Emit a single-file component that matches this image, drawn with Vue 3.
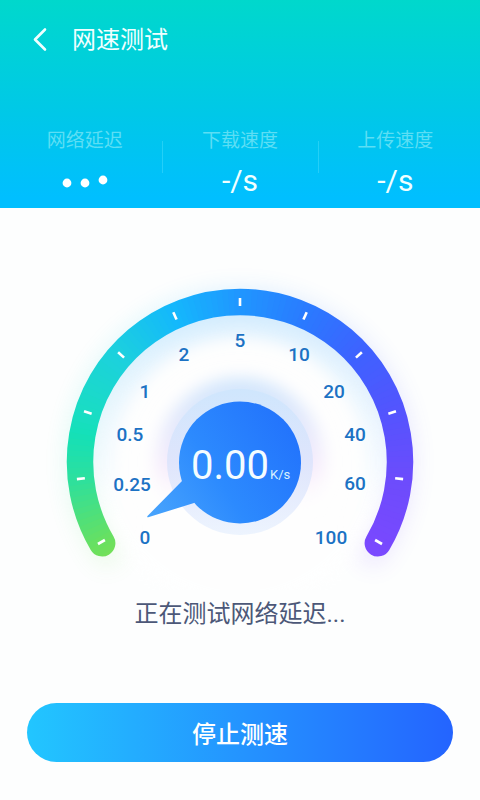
<script setup>
const CX = 190
const CY = 192
const R = 160

const point = (deg, r) => {
  const a = (deg * Math.PI) / 180
  return [CX + r * Math.sin(a), CY - r * Math.cos(a)]
}
const arc = (from, to, r = R) => {
  const [x1, y1] = point(from, r)
  const [x2, y2] = point(to, r)
  const large = to - from > 180 ? 1 : 0
  return `M${x1.toFixed(2)} ${y1.toFixed(2)}A${r} ${r} 0 ${large} 1 ${x2.toFixed(2)} ${y2.toFixed(2)}`
}

const stops = [
  [-128, [120, 224, 84]],
  [-120, [104, 224, 96]],
  [-96, [44, 224, 158]],
  [-80, [20, 224, 184]],
  [-72, [26, 220, 196]],
  [-48, [28, 208, 222]],
  [-24, [20, 184, 252]],
  [0, [32, 150, 255]],
  [24, [42, 122, 255]],
  [48, [62, 98, 255]],
  [72, [84, 84, 254]],
  [96, [108, 76, 252]],
  [128, [124, 72, 255]],
]
const colourAt = (deg) => {
  const i = Math.max(1, stops.findIndex(([d]) => d >= deg))
  const [d0, c0] = stops[i - 1]
  const [d1, c1] = stops[i]
  const t = (deg - d0) / (d1 - d0)
  return `rgb(${c0.map((v, k) => Math.round(v + (c1[k] - v) * t)).join(',')})`
}
const segments = Array.from({ length: 128 }, (_, i) => {
  const deg = -128 + i * 2
  return { d: arc(deg, Math.min(deg + 3, 128)), colour: colourAt(deg + 1) }
})
const ring = arc(-120.5, 120.5)
const ticks = Array.from({ length: 11 }, (_, i) => -120 + i * 24)

const labels = [
  { text: '0', x: 95, y: 274 },
  { text: '0.25', x: 82, y: 221 },
  { text: '0.5', x: 80, y: 171 },
  { text: '1', x: 95, y: 128 },
  { text: '2', x: 134, y: 91 },
  { text: '5', x: 190, y: 77 },
  { text: '10', x: 249, y: 91 },
  { text: '20', x: 284, y: 128 },
  { text: '40', x: 305, y: 171 },
  { text: '60', x: 305, y: 220 },
  { text: '100', x: 281, y: 274 },
]
</script>

<template>
  <div class="page">
    <header class="top">
      <div class="bar">
        <button class="back" type="button" aria-label="返回">
          <svg width="16" height="26" viewBox="0 0 16 26">
            <path d="M13 2.500L3 12.500L13 22.500" fill="none" stroke="currentColor" stroke-width="2.6" stroke-linecap="round" stroke-linejoin="round" />
          </svg>
        </button>
        <h1 class="title">网速测试</h1>
      </div>
      <div class="stats">
        <div class="stat">
          <span class="name">网络延迟</span>
          <span class="value">
            <svg width="46" height="16" viewBox="0 0 46 16" fill="#fff">
              <circle cx="5" cy="10" r="4.4" />
              <circle cx="23" cy="10" r="4.4" />
              <circle cx="41" cy="7" r="4.4" />
            </svg>
          </span>
        </div>
        <div class="stat">
          <span class="name">下载速度</span>
          <span class="value">-/s</span>
        </div>
        <div class="stat">
          <span class="name">上传速度</span>
          <span class="value">-/s</span>
        </div>
      </div>
    </header>

    <main class="content">
      <svg class="gauge" viewBox="0 0 380 320">
        <defs>
          <mask id="ring-mask" maskUnits="userSpaceOnUse" x="0" y="0" width="380" height="320">
            <path :d="ring" fill="none" stroke="#fff" stroke-width="26.5" stroke-linecap="round" />
          </mask>
          <filter id="glow" filterUnits="userSpaceOnUse" x="-40" y="-40" width="460" height="400">
            <feGaussianBlur stdDeviation="12" />
          </filter>
          <filter id="soft" filterUnits="userSpaceOnUse" x="0" y="0" width="380" height="320">
            <feGaussianBlur stdDeviation="8" />
          </filter>
          <linearGradient id="disc" gradientUnits="userSpaceOnUse" x1="98" y1="246" x2="246" y2="150">
            <stop offset="0" stop-color="#48a4fc" />
            <stop offset="0.45" stop-color="#2c8afe" />
            <stop offset="1" stop-color="#2272fc" />
          </linearGradient>
          <linearGradient id="halo" x1="0" y1="0" x2="0" y2="1">
            <stop offset="0" stop-color="#cfe6fd" />
            <stop offset="0.5" stop-color="#dfe5fc" />
            <stop offset="1" stop-color="#edf4fe" />
          </linearGradient>
          <linearGradient id="aura" x1="0" y1="0" x2="0" y2="1">
            <stop offset="0" stop-color="#c8e2fc" stop-opacity="0.9" />
            <stop offset="0.55" stop-color="#f6e8fb" stop-opacity="0.8" />
            <stop offset="0.8" stop-color="#fff" stop-opacity="0" />
          </linearGradient>
          <linearGradient id="fade" x1="0" y1="0" x2="0" y2="1">
            <stop offset="0" stop-color="#b4defd" stop-opacity="0.5" />
            <stop offset="0.5" stop-color="#d8f0fd" stop-opacity="0.25" />
            <stop offset="0.75" stop-color="#fff" stop-opacity="0" />
          </linearGradient>
          <clipPath id="inside"><circle :cx="CX" :cy="CY" r="148" /></clipPath>
        </defs>

        <g filter="url(#glow)" opacity="0.15">
          <path v-for="(s, i) in segments" :key="i" :d="s.d" :stroke="s.colour" fill="none" stroke-width="24" />
        </g>
        <circle :cx="CX" :cy="CY" r="147" fill="#fff" opacity="0.6" filter="url(#soft)" />
        <g clip-path="url(#inside)">
          <circle :cx="CX" :cy="CY" r="148" fill="none" stroke="url(#fade)" stroke-width="44" filter="url(#soft)" />
        </g>

        <g mask="url(#ring-mask)">
          <path v-for="(s, i) in segments" :key="i" :d="s.d" :stroke="s.colour" fill="none" stroke-width="34" />
        </g>
        <rect
          v-for="t in ticks"
          :key="t"
          :x="CX - 1.3"
          :y="CY - R - 4"
          width="2.6"
          height="8"
          fill="#fff"
          :transform="`rotate(${t} ${CX} ${CY})`"
        />

        <circle :cx="CX" :cy="CY" r="84" fill="url(#aura)" filter="url(#soft)" />
        <circle :cx="CX" :cy="CY" r="73" fill="url(#halo)" />
        <path d="M132 211L97.500 246Q96.500 248 99 247L144 233L190 200Z" fill="url(#disc)" />
        <circle :cx="CX" :cy="CY + 0.5" r="61" fill="url(#disc)" />

        <text v-for="l in labels" :key="l.text" class="mark" :x="l.x" :y="l.y">{{ l.text }}</text>
        <text class="speed" x="141" y="209">0.00</text>
        <text class="unit" x="220" y="209">K/s</text>
      </svg>

      <p class="status">正在测试网络延迟...</p>
      <button class="stop" type="button">停止测速</button>
    </main>
  </div>
</template>

<style>
body {
  margin: 0;
  background: #fdfefe;
}
</style>

<style scoped>
.page {
  min-height: 100vh;
  display: flex;
  flex-direction: column;
  font-family: Roboto, "Noto Sans CJK SC", sans-serif;
  background: #fdfefe;
}
.top {
  padding: 20px 7px 8px;
  background: linear-gradient(180deg, #00d8cc 0%, #00c8e8 55%, #00bfff 95%);
  color: #f0ffff;
}
.bar {
  display: flex;
  align-items: center;
  height: 40px;
  padding-left: 25px;
  gap: 24px;
}
.back {
  display: flex;
  padding: 0;
  border: 0;
  background: none;
  color: inherit;
}
.title {
  margin: 0;
  font-size: 24px;
  font-weight: 400;
  line-height: 40px;
}
.stats {
  display: grid;
  grid-template-columns: repeat(3, 1fr);
  margin-top: 67px;
}
.stat {
  position: relative;
  display: flex;
  flex-direction: column;
  align-items: center;
  gap: 6px;
}
.stat + .stat::before {
  content: "";
  position: absolute;
  left: 0;
  top: 14px;
  width: 1px;
  height: 32px;
  background: rgba(120, 235, 255, 0.3);
}
.name {
  font-size: 19px;
  line-height: 28px;
  font-weight: 400;
  color: #5cdef4;
}
.value {
  display: flex;
  align-items: center;
  height: 39px;
  font-size: 30px;
  line-height: 39px;
}
.content {
  flex: 1;
  display: flex;
  flex-direction: column;
  align-items: center;
  padding: 62px 27px 38px;
}
.gauge {
  display: block;
  width: 100%;
  max-width: 380px;
  overflow: visible;
}
.mark {
  font-size: 19px;
  font-weight: 500;
  fill: #1c72c4;
  text-anchor: middle;
}
.speed {
  font-size: 40px;
  font-weight: 400;
  fill: #f4fcff;
}
.unit {
  font-size: 13px;
  fill: #d8f0ff;
}
.status {
  margin: 6px 0 0;
  font-size: 24px;
  line-height: 36px;
  color: #4c5878;
}
.stop {
  width: 100%;
  height: 59px;
  margin-top: auto;
  padding: 5px 0 0;
  border: 0;
  border-radius: 30px;
  background: linear-gradient(90deg, #22c6ff 0%, #2494ff 50%, #2464ff 100%);
  color: #fff;
  font: 500 24px/54px Roboto, "Noto Sans CJK SC", sans-serif;
}
</style>
